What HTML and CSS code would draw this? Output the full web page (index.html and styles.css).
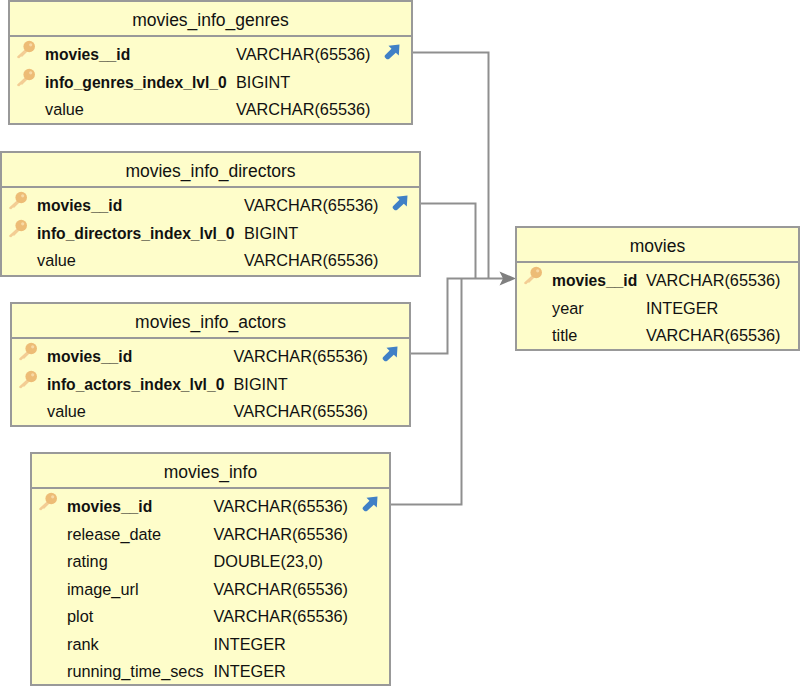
FILE: index.html
```html
<!DOCTYPE html>
<html lang="en">
<head>
<meta charset="utf-8">
<title>movies schema</title>
<link rel="stylesheet" href="styles.css">
</head>
<body>
<svg width="0" height="0" class="defs">
  <symbol id="key" viewBox="0 0 20 20">
    <path d="M10 8.500 L1.200 16.500 L1.500 18 L3.200 18.300 L5 16.600 L6.200 16.800 L12 11 Z" fill="#f3cd94"/>
    <circle cx="13.200" cy="6.500" r="5.800" fill="#edbc76"/>
    <circle cx="14.700" cy="4.800" r="1.600" fill="#f7d9a6"/>
  </symbol>
  <symbol id="fk" viewBox="0 0 16 16">
    <path d="M4.500 1.800 L15.500 0.500 L14.800 11.500 L11.800 8.800 L5 15 Q3.500 15.800 2.200 14.800 L0.800 13.200 Q0.200 12 1.200 11 L7.500 4.800 Z" fill="#4080c6"/>
  </symbol>
</svg>
<main class="canvas">
  <svg class="links" width="800" height="686" viewBox="0 0 800 686">
    <path d="M412 52.500H488.500V278M420 203.500H475.500V278M410 353.500H447.500V278.500H505M390 504.500H461.500V278.500" fill="none" stroke="#8f8f8f" stroke-width="2"/>
    <path d="M516 278.500 L499.500 271.500 L503 278.500 L499.500 285.500 Z" fill="#7f7f7f"/>
  </svg>

  <section class="table t-genres">
    <h2>movies_info_genres</h2>
    <div class="rows c-genres">
      <div class="row pk"><svg class="key"><use href="#key"/></svg><b>movies__id</b><span>VARCHAR(65536)</span><svg class="fk"><use href="#fk"/></svg></div>
      <div class="row pk"><svg class="key"><use href="#key"/></svg><b>info_genres_index_lvl_0</b><span>BIGINT</span></div>
      <div class="row"><i>value</i><span>VARCHAR(65536)</span></div>
    </div>
  </section>

  <section class="table t-directors">
    <h2>movies_info_directors</h2>
    <div class="rows c-directors">
      <div class="row pk"><svg class="key"><use href="#key"/></svg><b>movies__id</b><span>VARCHAR(65536)</span><svg class="fk"><use href="#fk"/></svg></div>
      <div class="row pk"><svg class="key"><use href="#key"/></svg><b>info_directors_index_lvl_0</b><span>BIGINT</span></div>
      <div class="row"><i>value</i><span>VARCHAR(65536)</span></div>
    </div>
  </section>

  <section class="table t-actors">
    <h2>movies_info_actors</h2>
    <div class="rows c-actors">
      <div class="row pk"><svg class="key"><use href="#key"/></svg><b>movies__id</b><span>VARCHAR(65536)</span><svg class="fk"><use href="#fk"/></svg></div>
      <div class="row pk"><svg class="key"><use href="#key"/></svg><b>info_actors_index_lvl_0</b><span>BIGINT</span></div>
      <div class="row"><i>value</i><span>VARCHAR(65536)</span></div>
    </div>
  </section>

  <section class="table t-info">
    <h2>movies_info</h2>
    <div class="rows c-info">
      <div class="row pk"><svg class="key"><use href="#key"/></svg><b>movies__id</b><span>VARCHAR(65536)</span><svg class="fk"><use href="#fk"/></svg></div>
      <div class="row"><i>release_date</i><span>VARCHAR(65536)</span></div>
      <div class="row"><i>rating</i><span>DOUBLE(23,0)</span></div>
      <div class="row"><i>image_url</i><span>VARCHAR(65536)</span></div>
      <div class="row"><i>plot</i><span>VARCHAR(65536)</span></div>
      <div class="row"><i>rank</i><span>INTEGER</span></div>
      <div class="row"><i>running_time_secs</i><span>INTEGER</span></div>
    </div>
  </section>

  <section class="table t-movies">
    <h2>movies</h2>
    <div class="rows c-movies">
      <div class="row pk"><svg class="key"><use href="#key"/></svg><b>movies__id</b><span>VARCHAR(65536)</span></div>
      <div class="row"><i>year</i><span>INTEGER</span></div>
      <div class="row"><i>title</i><span>VARCHAR(65536)</span></div>
    </div>
  </section>
</main>
</body>
</html>
```
FILE: styles.css
```css
html, body {
  margin: 0;
  padding: 0;
  background: #fff;
}
.defs {
  position: absolute;
}
.canvas {
  position: relative;
  width: 800px;
  height: 686px;
  overflow: hidden;
  font-family: "Liberation Sans", Arial, sans-serif;
  font-size: 16.300px;
  color: #111;
}
.links {
  position: absolute;
  left: 0;
  top: 0;
}
.table {
  position: absolute;
  box-sizing: border-box;
  background: #fefdca;
  border: 2px solid #999;
  display: flex;
  flex-direction: column;
}
.t-genres { left: 8px; top: 0; width: 405px; height: 125px; }
.t-directors { left: 0; top: 151px; width: 421px; height: 126px; }
.t-actors { left: 10px; top: 302px; width: 401px; height: 125px; }
.t-info { left: 30px; top: 452px; width: 361px; height: 234px; }
.t-movies { left: 515px; top: 226px; width: 285px; height: 125px; }
h2 {
  margin: 0;
  height: 35px;
  flex: none;
  box-sizing: border-box;
  border-bottom: 2px solid #999;
  font-size: 17.500px;
  font-weight: 400;
  line-height: 37px;
  text-align: center;
}
.rows {
  display: flex;
  flex-direction: column;
  padding-top: 4px;
}
.row {
  position: relative;
  height: 27.500px;
  line-height: 27.500px;
  display: grid;
  white-space: nowrap;
}
.c-genres .row { grid-template-columns: 191px 1fr; padding-left: 35px; }
.c-directors .row { grid-template-columns: 207px 1fr; padding-left: 35px; }
.c-actors .row { grid-template-columns: 186.500px 1fr; padding-left: 35px; }
.c-info .row { grid-template-columns: 146.500px 1fr; padding-left: 35px; }
.c-movies .row { grid-template-columns: 94px 1fr; padding-left: 35px; }
.row b { font-weight: 700; font-size: 15.650px; }
.row i { font-style: normal; }
.key {
  position: absolute;
  left: 6px;
  top: -1px;
  width: 20px;
  height: 20px;
}
.fk {
  position: absolute;
  right: 11px;
  top: 3px;
  width: 16px;
  height: 16px;
}
```
